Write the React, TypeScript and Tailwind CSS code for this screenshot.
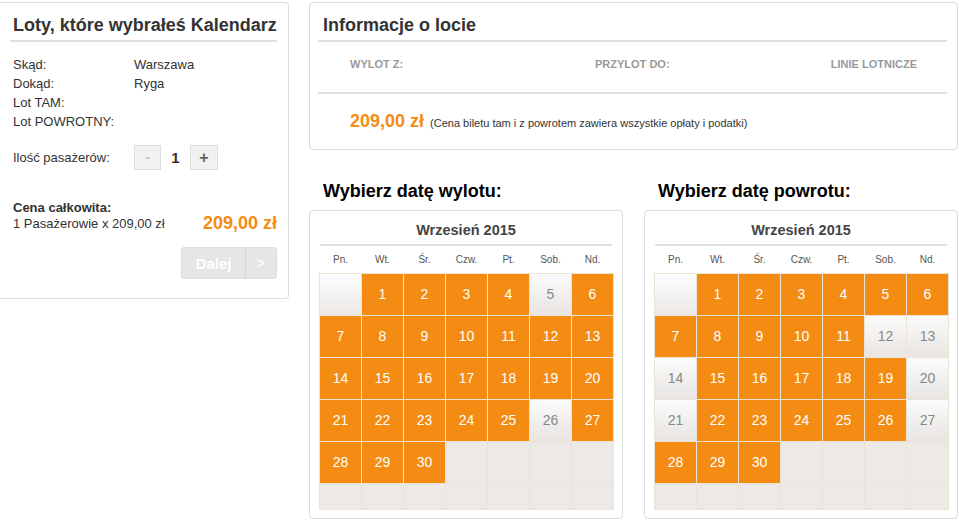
import React from "react";

type Cell = { t: "g" | "f" } | { t: "o" | "d"; n: number };

function buildCells(disabled: number[]): Cell[] {
  const cells: Cell[] = [{ t: "g" }];
  for (let n = 1; n <= 30; n++) cells.push({ t: disabled.includes(n) ? "d" : "o", n });
  while (cells.length < 42) cells.push({ t: "f" });
  return cells;
}

const days = ["Pn.", "Wt.", "Śr.", "Czw.", "Pt.", "Sob.", "Nd."];

function Calendar({ title, disabled }: { title: string; disabled: number[] }) {
  const cells = buildCells(disabled);
  return (
    <div className="flex flex-col w-[314px]">
      <div className="h-[36px] pl-[14px] pt-[6px] text-[18px] leading-[22px] font-bold text-black">{title}</div>
      <div className="border border-[#dcdcdc] rounded-[4px] bg-white pt-[9px] pl-[9px] pr-[9px] pb-[10px] h-[309px]">
        <div className="mx-[1px] h-[26px] border-b-2 border-[#e3e0da] text-center text-[14.5px] leading-[20px] font-bold text-[#444]">
          Wrzesień 2015
        </div>
        <div className="grid grid-cols-[repeat(7,41px)] gap-px px-px h-[27px] items-center">
          {days.map((d) => (
            <div key={d} className="text-center text-[10px] text-[#555]">
              {d}
            </div>
          ))}
        </div>
        <div className="grid grid-cols-[repeat(7,41px)] grid-rows-[41px_41px_41px_41px_41px_25px] gap-px bg-[#e9e4d4] border border-[#e9e4d4] w-[295px]">
          {cells.map((c, i) => {
            if (c.t === "g")
              return <div key={i} className="bg-linear-to-b from-[#fdfdfd] to-[#ebe8e5]" />;
            if (c.t === "f") return <div key={i} className="bg-[#ede9e7]" />;
            if (c.t === "d")
              return (
                <div
                  key={i}
                  className="bg-linear-to-b from-[#fbfbfb] to-[#e8e5e2] flex items-center justify-center text-[14px] text-[#888]"
                >
                  {c.n}
                </div>
              );
            return (
              <div key={i} className="bg-[#f48b13] flex items-center justify-center text-[14px] text-white">
                {c.n}
              </div>
            );
          })}
        </div>
      </div>
    </div>
  );
}

export default function App() {
  return (
    <div className="flex w-[959px] h-[528px] bg-white font-['Liberation_Sans',Arial,sans-serif] text-[#333]">
      {/* Left panel */}
      <div className="mt-[2px] w-[289px] h-[297px] border border-l-0 border-[#dcdcdc] rounded-r-[4px] pl-[10px] pr-[11px] pt-[12px] shrink-0">
        <div className="pl-[3px] text-[18px] leading-[20px] font-bold text-[#333] pb-[5px] border-b-2 border-[#e3e0da]">
          Loty, które wybrałeś Kalendarz
        </div>
        <div className="pl-[3px] pt-[13px] text-[13px] leading-[19px]">
          <div className="flex">
            <span className="w-[121px]">Skąd:</span>
            <span>Warszawa</span>
          </div>
          <div className="flex">
            <span className="w-[121px]">Dokąd:</span>
            <span>Ryga</span>
          </div>
          <div>Lot TAM:</div>
          <div>Lot POWROTNY:</div>
          <div className="flex items-center mt-[14px] h-[25px]">
            <span className="w-[121px]">Ilość pasażerów:</span>
            <div className="w-[27px] h-[25px] border border-[#dedede] bg-[#f1f1f1] flex items-center justify-center text-[#c4c4c4] font-bold text-[14px]">
              -
            </div>
            <span className="w-[29px] text-center text-[15px] font-bold text-[#333]">1</span>
            <div className="w-[28px] h-[25px] border border-[#dedede] bg-[#f1f1f1] flex items-center justify-center text-[#666] font-bold text-[16px]">
              +
            </div>
          </div>
          <div className="mt-[30px] font-bold leading-[15px]">Cena całkowita:</div>
          <div className="flex items-center justify-between h-[16px]">
            <span>1 Pasażerowie x 209,00 zł</span>
            <span className="text-[18px] leading-[20px] font-bold text-[#f48b13]">209,00 zł</span>
          </div>
          <div className="flex justify-end mt-[16px]">
            <div className="flex w-[96px] h-[32px] rounded-[3px] border border-[#dcdcdc] bg-[#e6e6e6] text-white">
              <div className="w-[64px] flex items-center justify-center text-[15px] font-bold border-r border-[#d3d3d3]">
                Dalej
              </div>
              <div className="flex-1 flex items-center justify-center text-[14px]">&gt;</div>
            </div>
          </div>
        </div>
      </div>

      {/* Right column */}
      <div className="ml-[20px] w-[649px] flex flex-col">
        <div className="mt-[2px] h-[148px] border border-[#dcdcdc] rounded-[4px] pl-[8px] pr-[10px] pt-[12px]">
          <div className="pl-[5px] text-[18px] leading-[20px] font-bold text-[#333] pb-[5px] border-b-2 border-[#e3e0da]">
            Informacje o locie
          </div>
          <div className="flex h-[52px] border-b-2 border-[#e3e0da] pt-[15px] text-[11px] font-bold text-[#999] leading-[14px]">
            <span className="ml-[32px] w-[245px]">WYLOT Z:</span>
            <span className="flex-1">PRZYLOT DO:</span>
            <span className="mr-[30px]">LINIE LOTNICZE</span>
          </div>
          <div className="flex items-end pl-[32px] pt-[17px]">
            <span className="text-[18px] leading-[20px] font-bold text-[#f48b13]">209,00 zł</span>
            <span className="ml-[6px] text-[11px] leading-[14px] text-[#333] mb-[1px]">
              (Cena biletu tam i z powrotem zawiera wszystkie opłaty i podatki)
            </span>
          </div>
        </div>
        <div className="mt-[24px] flex gap-[21px]">
          <Calendar title="Wybierz datę wylotu:" disabled={[5, 26]} />
          <Calendar title="Wybierz datę powrotu:" disabled={[12, 13, 14, 20, 21, 27]} />
        </div>
      </div>
    </div>
  );
}
